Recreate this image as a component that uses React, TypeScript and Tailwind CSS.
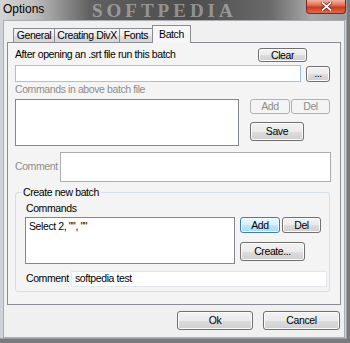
import clsx from 'clsx';

const font = "font-['Liberation_Sans',Arial,sans-serif]";

type BtnProps = { label: string; size: string; kind?: 'normal' | 'disabled' | 'focus' };

const Btn = ({ label, size, kind = 'normal' }: BtnProps) => (
  <div
    className={clsx(
      'flex shrink-0 items-center justify-center rounded-[3px] border leading-none',
      size,
      kind === 'normal' &&
        'border-[#707070] text-black bg-[linear-gradient(#f2f2f2_0%,#ebebeb_50%,#dddddd_51%,#cfcfcf_100%)] shadow-[inset_0_0_0_1px_#fbfbfb]',
      kind === 'focus' &&
        'border-[#3c7fb1] text-black bg-[linear-gradient(#eaf6fd_0%,#d9f0fc_50%,#bee6fd_51%,#a7d9f5_100%)] shadow-[inset_0_0_0_1px_#f4fbff]',
      kind === 'disabled' && 'border-[#adb2b5] bg-[#f4f4f4] text-[#8d8d8d]'
    )}
  >
    {label}
  </div>
);

const tabs = [
  { label: 'General', w: 'w-[42px]' },
  { label: 'Creating DivX', w: 'w-[66px]' },
  { label: 'Fonts', w: 'w-[34px]' },
];

export default function App() {
  return (
    <div
      className={clsx(
        'w-[350px] h-[343px] overflow-hidden bg-[#7a7a7a] text-[10.5px] tracking-[-0.4px] whitespace-nowrap text-black',
        font
      )}
    >
      <div className="w-[347px] h-[339px] bg-[#cfd3d8] flex flex-col border-r border-b border-[#9aa0a6]">
        {/* title bar */}
        <div className="relative h-[20px] shrink-0 overflow-hidden bg-[linear-gradient(90deg,#d4d4d4_0%,#bdbdbd_10%,#606060_26%,#4c4c4c_55%,#6a6a6a_78%,#a9a9a9_90%,#9b9b9b_100%)] flex items-start">
          <span className="pl-[3px] pt-[3px] text-[12px] tracking-normal leading-none text-black">Options</span>
          <span className="absolute left-[92px] top-[1px] leading-none font-['Liberation_Serif',serif] font-bold text-[19px] tracking-[4px] text-white/40">
            SOFTPEDIA
          </span>
          <div className="absolute right-[0px] top-0 w-[40px] h-[14px] rounded-b-[4px] border border-t-0 border-[#7a2a1e] bg-[linear-gradient(#f0b3a2_0%,#e0705a_40%,#cc3a1e_55%,#e46a4c_100%)] flex items-center justify-center">
            <svg width="11" height="9" viewBox="0 0 11 9">
              <path d="M1.5 1 L9.5 8 M9.5 1 L1.5 8" stroke="#5a1c14" strokeWidth="3.2" strokeLinecap="square" />
              <path d="M1.5 1 L9.5 8 M9.5 1 L1.5 8" stroke="#ffffff" strokeWidth="1.8" strokeLinecap="square" />
            </svg>
          </div>
        </div>

        {/* client area */}
        <div className="ml-[3px] w-[342px] h-[318px] bg-[#f0f0f0] border border-[#a9aeb4] flex flex-col">
          {/* tabs */}
          <div className="ml-[6px] mt-[4px] h-[17px] flex items-end pl-[3px] relative z-10">
            {tabs.map((t) => (
              <div
                key={t.label}
                className={clsx(
                  'h-[14px] -mr-px border border-b-0 border-[#898c95] bg-[linear-gradient(#f3f3f3_0%,#ebebeb_50%,#dedede_51%,#d5d5d5_100%)] flex items-center justify-center',
                  t.w
                )}
              >
                {t.label}
              </div>
            ))}
            <div className="h-[18px] w-[39px] -mb-px border border-b-0 border-[#898c95] bg-[#f7f7f7] flex items-center justify-center">
              Batch
            </div>
          </div>

          {/* tab panel */}
          <div className="ml-[3px] w-[334px] h-[263px] border border-[#898c95] bg-[#f4f4f4] flex flex-col pl-[7px]">
            <div className="mt-[5px] flex items-center justify-between w-[292px] h-[14px]">
              <span>After opening an .srt file run this batch</span>
              <Btn label="Clear" size="w-[49px] h-[14px]" />
            </div>
            <div className="mt-[3px] flex items-center gap-[5px]">
              <div className="w-[286px] h-[17px] bg-white border border-[#9fc3e6]" />
              <Btn label="..." size="w-[24px] h-[16px]" />
            </div>
            <div className="mt-[1px] h-[13px] leading-[13px] text-[#8d8d8d]">Commands in above batch file</div>
            <div className="mt-[3px] flex gap-[11px]">
              <div className="w-[224px] h-[47px] bg-white border border-[#828790]" />
              <div className="flex flex-col">
                <div className="flex gap-[1px]">
                  <Btn label="Add" size="w-[40px] h-[15px]" kind="disabled" />
                  <Btn label="Del" size="w-[39px] h-[15px]" kind="disabled" />
                </div>
                <div className="mt-[8px]">
                  <Btn label="Save" size="w-[54px] h-[19px]" kind="normal" />
                </div>
              </div>
            </div>
            <div className="mt-[6px] flex items-center">
              <span className="w-[45px] shrink-0 text-[#8d8d8d]">Comment</span>
              <div className="w-[271px] h-[30px] bg-white border border-[#abadb3]" />
            </div>

            {/* group box */}
            <div className="relative mt-[10px] w-[315px] h-[100px] rounded-[3px] border border-[#d5dfe5] pl-[9px] flex flex-col">
              <span className="absolute left-[5px] top-[-7px] leading-[12px] px-[2px] bg-[#f4f4f4]">Create new batch</span>
              <div className="mt-[9px] pl-[1px] h-[13px] leading-[13px]">Commands</div>
              <div className="mt-[2px] flex gap-[5px]">
                <div className="w-[210px] h-[47px] bg-white border border-[#828790] pl-[3px] pt-[1px]">
                  {'Select 2, "", ""'}
                </div>
                <div className="flex flex-col">
                  <div className="flex gap-[2px]">
                    <Btn label="Add" size="w-[40px] h-[16px]" kind="focus" />
                    <Btn label="Del" size="w-[39px] h-[16px]" />
                  </div>
                  <div className="mt-[9px]">
                    <Btn label="Create..." size="w-[65px] h-[19px]" />
                  </div>
                </div>
              </div>
              <div className="mt-[7px] flex items-center">
                <span className="pl-[1px] w-[46px] shrink-0">Comment</span>
                <div className="w-[256px] h-[16px] bg-white border border-[#e3e6ea] flex items-center pl-[3px]">
                  softpedia test
                </div>
              </div>
            </div>
          </div>

          {/* dialog buttons */}
          <div className="mt-[6px] flex justify-end gap-[10px] pr-[4px]">
            <Btn label="Ok" size="w-[76px] h-[19px]" />
            <Btn label="Cancel" size="w-[77px] h-[19px]" />
          </div>
        </div>
      </div>
    </div>
  );
}
